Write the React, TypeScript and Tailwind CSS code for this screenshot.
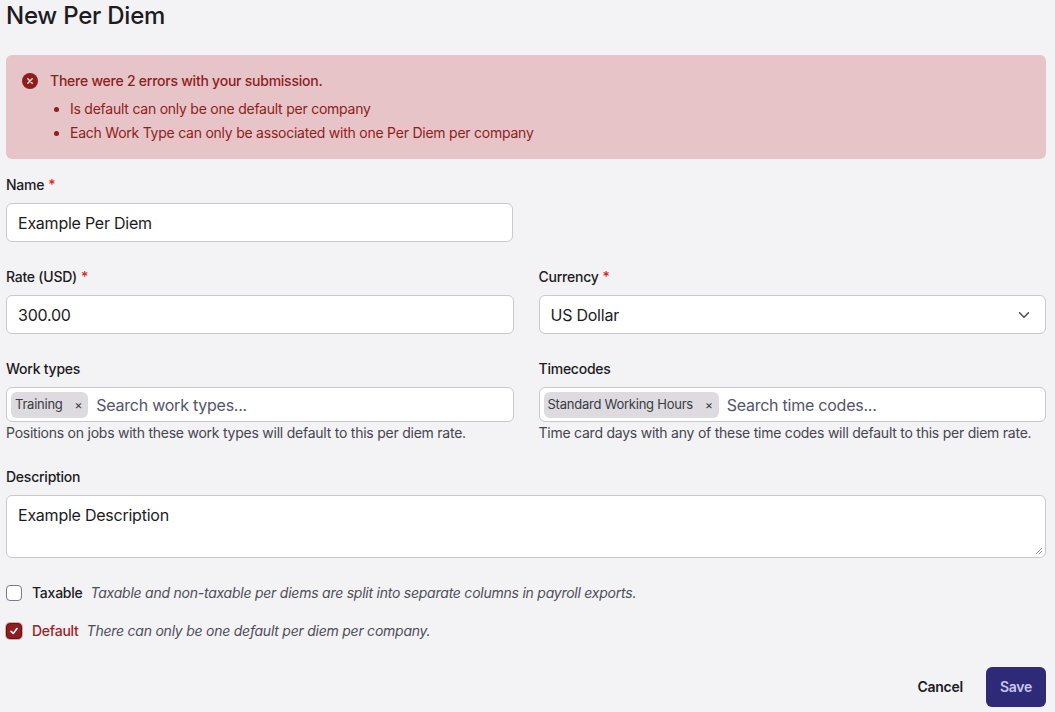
import { ChevronDown } from "lucide-react";

const errors = [
  "Is default can only be one default per company",
  "Each Work Type can only be associated with one Per Diem per company",
];

const Label = ({ text, required }: { text: string; required?: boolean }) => (
  <label className="block text-sm font-medium leading-5 text-[#1c1b22]">
    {text}
    {required && <span className="ml-1 text-[#e0241b]">*</span>}
  </label>
);

const Chip = ({ text }: { text: string }) => (
  <span className="flex h-[26px] shrink-0 items-center gap-3 rounded-md bg-[#dddbe0] pl-[4px] pr-[6px] text-[13px] text-[#3a3a42]">
    {text}
    <span className="text-[12px] text-[#3a3a42]">×</span>
  </span>
);

const App = () => {
  return (
    <div className="min-h-[712px] w-full bg-[#f3f2f5] font-['Inter',sans-serif] tracking-[-0.015em] text-[#1c1b22]">
      <div className="ml-[6px] w-[1040px]">
        <h1 className="h-8 text-2xl leading-8 font-medium text-[#1c1b22]">
          New Per Diem
        </h1>

        <div className="mt-[23px] flex rounded-md bg-[#e6c4c7] p-4">
          <div className="mt-[2px] h-4 w-4 shrink-0">
            <svg viewBox="0 0 16 16" className="h-4 w-4">
              <circle cx="8" cy="8" r="8" fill="#8f1d1d" />
              <path
                d="M5.8 5.8 L10.2 10.2 M10.2 5.8 L5.8 10.2"
                stroke="#f2dede"
                strokeWidth="1.5"
                strokeLinecap="round"
              />
            </svg>
          </div>
          <div className="ml-3 text-sm leading-5 text-[#8f1d1d]">
            <p className="font-medium">There were 2 errors with your submission.</p>
            <ul className="mt-2 list-disc space-y-1 pl-5">
              {errors.map((e) => (
                <li key={e}>{e}</li>
              ))}
            </ul>
          </div>
        </div>

        <div className="mt-4 w-[507px]">
          <Label text="Name" required />
          <div className="mt-2 flex h-[39px] items-center rounded-md border border-[#c9c8cd] bg-white px-[11px] text-base text-[#1c1b22]">
            Example Per Diem
          </div>
        </div>

        <div className="mt-[25px] grid grid-cols-2 gap-x-[25px]">
          <div>
            <Label text="Rate (USD)" required />
            <div className="mt-2 flex h-[39px] items-center rounded-md border border-[#c9c8cd] bg-white px-[11px] text-base">
              300.00
            </div>
          </div>
          <div>
            <Label text="Currency" required />
            <div className="mt-2 flex h-[39px] items-center justify-between rounded-md border border-[#c9c8cd] bg-white pl-[11px] pr-[12px] text-base">
              US Dollar
              <ChevronDown className="h-[18px] w-[18px] text-[#4b4a5c]" strokeWidth={2} />
            </div>
          </div>
        </div>

        <div className="mt-[25px] grid grid-cols-2 gap-x-[25px]">
          <div>
            <Label text="Work types" />
            <div className="mt-2 flex h-[35px] items-center gap-2 rounded-md border border-[#c9c8cd] bg-white px-[4px] text-base">
              <Chip text="Training" />
              <span className="text-[#55546a]">Search work types...</span>
            </div>
            <p className="mt-[1px] whitespace-nowrap text-sm leading-5 text-[#46454f]">
              Positions on jobs with these work types will default to this per diem rate.
            </p>
          </div>
          <div>
            <Label text="Timecodes" />
            <div className="mt-2 flex h-[35px] items-center gap-2 rounded-md border border-[#c9c8cd] bg-white px-[4px] text-base">
              <Chip text="Standard Working Hours" />
              <span className="text-[#55546a]">Search time codes...</span>
            </div>
            <p className="mt-[1px] whitespace-nowrap text-sm leading-5 text-[#46454f]">
              Time card days with any of these time codes will default to this per diem rate.
            </p>
          </div>
        </div>

        <div className="mt-[24px]">
          <Label text="Description" />
          <div className="relative mt-2 h-[63px] rounded-md border border-[#c9c8cd] bg-white px-[11px] py-[7px] text-base leading-6">
            Example Description
            <svg viewBox="0 0 8 8" className="absolute bottom-[2px] right-[2px] h-2 w-2">
              <path d="M1 7 L7 1 M4 7 L7 4" stroke="#9a99a2" strokeWidth="1" />
            </svg>
          </div>
        </div>

        <div className="mt-[25px] flex items-center gap-2 text-sm leading-5">
          <span className="h-4 w-4 shrink-0 rounded-[4px] border border-[#7b7a88] bg-white" />
          <span className="ml-[2px] font-medium text-[#1c1b22]">Taxable</span>
          <span className="italic text-[#4f4e58]">
            Taxable and non-taxable per diems are split into separate columns in payroll exports.
          </span>
        </div>

        <div className="mt-[18px] flex items-center gap-2 text-sm leading-5">
          <span className="flex h-4 w-4 shrink-0 items-center justify-center rounded-[4px] border border-[#5e1515] bg-[#8f1d1d] ring-1 ring-[#d9a9ad]">
            <svg viewBox="0 0 16 16" className="h-3 w-3">
              <path
                d="M4 8.5 L7 11.2 L12 4.8"
                fill="none"
                stroke="white"
                strokeWidth="2.2"
                strokeLinecap="round"
                strokeLinejoin="round"
              />
            </svg>
          </span>
          <span className="ml-[2px] font-medium text-[#a51d1d]">Default</span>
          <span className="italic text-[#4f4e58]">
            There can only be one default per diem per company.
          </span>
        </div>

        <div className="mt-[26px] flex items-center justify-end gap-[23px]">
          <button className="text-sm font-semibold text-[#1c1b22]">Cancel</button>
          <button className="h-10 w-[60px] rounded-md bg-[#2e2a78] text-sm font-semibold text-[#c9c5f2]">
            Save
          </button>
        </div>
      </div>
    </div>
  );
};

export default App;
